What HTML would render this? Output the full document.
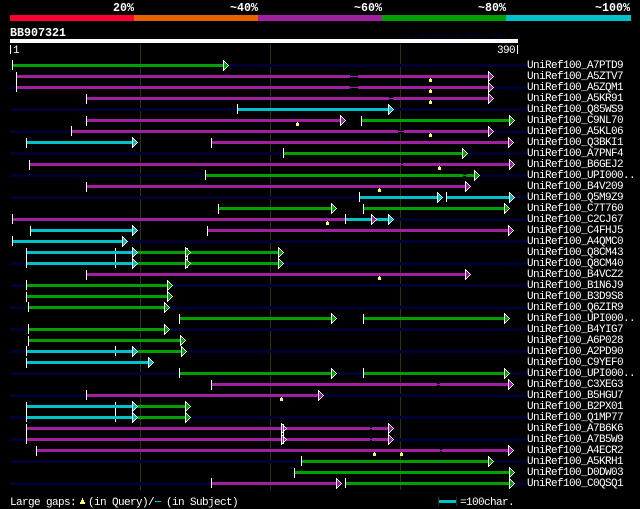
<!DOCTYPE html>
<html><head><meta charset="utf-8"><style>
html,body{margin:0;padding:0;background:#000;width:640px;height:509px;overflow:hidden}
svg{display:block}
rect{shape-rendering:crispEdges}
text{font-family:"Liberation Mono",monospace;font-size:11px;letter-spacing:-.6px;fill:#fff;white-space:pre}
.h{font-weight:bold;font-size:11.67px;letter-spacing:0}
.p{fill:#a020a0}.g{fill:#00a000}.c{fill:#00c0c8}.d{fill:#000033}.y{fill:#ffff66}.l{fill:#333300}.w{fill:#fff}
</style></head><body>
<svg width="640" height="509" viewBox="0 0 640 509" xmlns="http://www.w3.org/2000/svg">
<defs>
<g id="a"><rect class="w" x="0" y="-5" width="1" height="11"/><rect class="w" x="1" y="-4" width="1" height="9"/><rect class="w" x="2" y="-3" width="1" height="7"/><rect class="w" x="3" y="-2" width="1" height="5"/><rect class="w" x="4" y="-1" width="1" height="3"/><rect class="w" x="5" y="0" width="1" height="1"/><rect x="1" y="-3" width="1" height="7"/><rect x="2" y="-2" width="1" height="5"/><rect x="3" y="-1" width="1" height="3"/><rect x="4" y="0" width="1" height="1"/></g>
<rect id="t" class="w" x="0" y="-5" width="1" height="10"/>
<rect id="u" class="w" x="0" y="-4" width="1" height="10"/>
<g id="k"><rect class="y" x="0" y="2" width="1" height="1"/><rect class="y" x="-1" y="3" width="3" height="3"/></g>
</defs>

<text class="h" x="113" y="11">20%</text><text class="h" x="230" y="11">~40%</text><text class="h" x="354" y="11">~60%</text><text class="h" x="478" y="11">~80%</text><text class="h" x="595" y="11">~100%</text>
<rect x="10" y="15" width="124" height="6" fill="#ff0033"/><rect x="134" y="15" width="124" height="6" fill="#e66100"/><rect class="p" x="258" y="15" width="124" height="6"/><rect class="g" x="382" y="15" width="124" height="6"/><rect class="c" x="506" y="15" width="125" height="6"/>
<text class="h" x="10" y="36">BB907321</text>
<text x="402" y="38" style="fill:#000033;font-size:9px;letter-spacing:-.4px">AlignView.pm Beta rel.7</text>
<rect class="w" x="10" y="39" width="508" height="4"/>
<rect class="w" x="10" y="45" width="1" height="9"/><text x="13" y="53">1</text>
<text x="497" y="53">390</text><rect class="w" x="517" y="45" width="1" height="9"/>

<rect class="l" x="140" y="44" width="1" height="446"/><rect class="l" x="270" y="44" width="1" height="446"/><rect class="l" x="400" y="44" width="1" height="446"/>

<rect class="d" x="10" y="64" width="517" height="3"/><rect class="d" x="10" y="86" width="517" height="3"/><rect class="d" x="10" y="108" width="517" height="3"/><rect class="d" x="10" y="130" width="517" height="3"/><rect class="d" x="10" y="152" width="517" height="3"/><rect class="d" x="10" y="174" width="517" height="3"/><rect class="d" x="10" y="196" width="517" height="3"/><rect class="d" x="10" y="218" width="517" height="3"/><rect class="d" x="10" y="240" width="517" height="3"/><rect class="d" x="10" y="262" width="517" height="3"/><rect class="d" x="10" y="284" width="517" height="3"/><rect class="d" x="10" y="306" width="517" height="3"/><rect class="d" x="10" y="328" width="517" height="3"/><rect class="d" x="10" y="350" width="517" height="3"/><rect class="d" x="10" y="372" width="517" height="3"/><rect class="d" x="10" y="394" width="517" height="3"/><rect class="d" x="10" y="416" width="517" height="3"/><rect class="d" x="10" y="438" width="517" height="3"/><rect class="d" x="10" y="460" width="517" height="3"/><rect class="d" x="10" y="482" width="517" height="3"/>

<!-- 0 -->
<rect class="g" x="12" y="64" width="211" height="3"/><use href="#t" x="12" y="65"/><use href="#a" class="g" x="223" y="65"/>
<!-- 1 -->
<rect class="p" x="16" y="75" width="334" height="3"/><rect class="p" x="350" y="76" width="8" height="1"/><rect class="p" x="358" y="75" width="130" height="3"/><use href="#u" x="16" y="76"/><use href="#a" class="p" x="488" y="76"/><use href="#k" x="430" y="76"/>
<!-- 2 -->
<rect class="p" x="16" y="86" width="334" height="3"/><rect x="350" y="86" width="8" height="1" fill="#000"/><rect x="350" y="88" width="8" height="1" fill="#000"/><rect class="p" x="350" y="87" width="8" height="1"/><rect class="p" x="358" y="86" width="130" height="3"/><use href="#t" x="16" y="87"/><use href="#a" class="p" x="488" y="87"/><use href="#k" x="430" y="87"/>
<!-- 3 -->
<rect class="p" x="86" y="97" width="303" height="3"/><rect class="p" x="389" y="98" width="4" height="1"/><rect class="p" x="393" y="97" width="95" height="3"/><use href="#u" x="86" y="98"/><use href="#a" class="p" x="488" y="98"/><use href="#k" x="430" y="98"/>
<!-- 4 -->
<rect class="c" x="237" y="108" width="151" height="3"/><use href="#t" x="237" y="109"/><use href="#a" class="c" x="388" y="109"/>
<!-- 5 -->
<rect class="p" x="86" y="119" width="254" height="3"/><use href="#u" x="86" y="120"/><use href="#a" class="p" x="340" y="120"/><use href="#k" x="297" y="120"/><rect class="g" x="361" y="119" width="148" height="3"/><use href="#u" x="361" y="120"/><use href="#a" class="g" x="509" y="120"/>
<!-- 6 -->
<rect class="p" x="71" y="130" width="327" height="3"/><rect x="398" y="130" width="6" height="3" fill="#000"/><rect class="p" x="398" y="131" width="6" height="1"/><rect class="p" x="404" y="130" width="84" height="3"/><use href="#t" x="71" y="131"/><use href="#a" class="p" x="488" y="131"/><use href="#k" x="430" y="131"/>
<!-- 7 -->
<rect class="c" x="26" y="141" width="106" height="3"/><use href="#u" x="26" y="142"/><use href="#a" class="c" x="132" y="142"/><rect class="p" x="211" y="141" width="297" height="3"/><use href="#u" x="211" y="142"/><use href="#a" class="p" x="508" y="142"/>
<!-- 8 -->
<rect class="g" x="283" y="152" width="179" height="3"/><use href="#t" x="283" y="153"/><use href="#a" class="g" x="462" y="153"/>
<!-- 9 -->
<rect class="p" x="29" y="163" width="372" height="3"/><rect class="p" x="401" y="164" width="2" height="1"/><rect class="p" x="403" y="163" width="106" height="3"/><use href="#u" x="29" y="164"/><use href="#a" class="p" x="509" y="164"/><use href="#k" x="439" y="164"/>
<!-- 10 -->
<rect class="g" x="205" y="174" width="258" height="3"/><rect x="463" y="174" width="3" height="3" fill="#000"/><rect class="g" x="463" y="175" width="3" height="1"/><rect class="g" x="466" y="174" width="8" height="3"/><use href="#t" x="205" y="175"/><use href="#a" class="g" x="474" y="175"/>
<!-- 11 -->
<rect class="p" x="86" y="185" width="379" height="3"/><use href="#u" x="86" y="186"/><use href="#a" class="p" x="465" y="186"/><use href="#k" x="379" y="186"/>
<!-- 12 -->
<rect class="c" x="359" y="196" width="78" height="3"/><use href="#t" x="359" y="197"/><use href="#a" class="c" x="437" y="197"/><rect x="443" y="196" width="3" height="3" fill="#000"/><rect class="c" x="446" y="196" width="63" height="3"/><use href="#t" x="446" y="197"/><use href="#a" class="c" x="509" y="197"/>
<!-- 13 -->
<rect class="g" x="218" y="207" width="113" height="3"/><use href="#u" x="218" y="208"/><use href="#a" class="g" x="331" y="208"/><rect class="g" x="363" y="207" width="141" height="3"/><use href="#u" x="363" y="208"/><use href="#a" class="g" x="504" y="208"/>
<!-- 14 -->
<rect class="p" x="12" y="218" width="333" height="3"/><use href="#t" x="12" y="219"/><use href="#k" x="327" y="219"/><rect class="c" x="345" y="218" width="43" height="3"/><use href="#t" x="345" y="219"/><use href="#a" class="p" x="371" y="219"/><use href="#a" class="c" x="388" y="219"/>
<!-- 15 -->
<rect class="c" x="30" y="229" width="102" height="3"/><use href="#u" x="30" y="230"/><use href="#a" class="c" x="132" y="230"/><rect class="p" x="207" y="229" width="301" height="3"/><use href="#u" x="207" y="230"/><use href="#a" class="p" x="508" y="230"/>
<!-- 16 -->
<rect class="c" x="12" y="240" width="110" height="3"/><use href="#t" x="12" y="241"/><use href="#a" class="c" x="122" y="241"/>
<!-- 17 -->
<use href="#u" x="115" y="252"/><use href="#u" x="187" y="252"/><rect class="c" x="26" y="251" width="106" height="3"/><rect class="g" x="132" y="251" width="146" height="3"/><use href="#u" x="26" y="252"/><use href="#a" class="c" x="132" y="252"/><use href="#a" class="g" x="185" y="252"/><use href="#a" class="g" x="278" y="252"/>
<!-- 18 -->
<use href="#t" x="115" y="263"/><use href="#t" x="187" y="263"/><rect class="c" x="26" y="262" width="106" height="3"/><rect class="g" x="132" y="262" width="146" height="3"/><use href="#t" x="26" y="263"/><use href="#a" class="c" x="132" y="263"/><use href="#a" class="g" x="185" y="263"/><use href="#a" class="g" x="278" y="263"/>
<!-- 19 -->
<rect class="p" x="86" y="273" width="379" height="3"/><use href="#u" x="86" y="274"/><use href="#a" class="p" x="465" y="274"/><use href="#k" x="379" y="274"/>
<!-- 20 -->
<rect class="g" x="26" y="284" width="141" height="3"/><use href="#t" x="26" y="285"/><use href="#a" class="g" x="167" y="285"/>
<!-- 21 -->
<rect class="g" x="26" y="295" width="141" height="3"/><use href="#u" x="26" y="296"/><use href="#a" class="g" x="167" y="296"/>
<!-- 22 -->
<rect class="g" x="28" y="306" width="136" height="3"/><use href="#t" x="28" y="307"/><use href="#a" class="g" x="164" y="307"/>
<!-- 23 -->
<rect class="g" x="179" y="317" width="152" height="3"/><use href="#u" x="179" y="318"/><use href="#a" class="g" x="331" y="318"/><rect class="g" x="363" y="317" width="141" height="3"/><use href="#u" x="363" y="318"/><use href="#a" class="g" x="504" y="318"/>
<!-- 24 -->
<rect class="g" x="28" y="328" width="136" height="3"/><use href="#t" x="28" y="329"/><use href="#a" class="g" x="164" y="329"/>
<!-- 25 -->
<rect class="g" x="28" y="339" width="152" height="3"/><use href="#u" x="28" y="340"/><use href="#a" class="g" x="180" y="340"/>
<!-- 26 -->
<use href="#t" x="115" y="351"/><rect class="c" x="26" y="350" width="106" height="3"/><rect class="g" x="132" y="350" width="49" height="3"/><use href="#t" x="26" y="351"/><use href="#a" class="c" x="132" y="351"/><use href="#a" class="g" x="181" y="351"/>
<!-- 27 -->
<rect class="c" x="26" y="361" width="122" height="3"/><use href="#u" x="26" y="362"/><use href="#a" class="c" x="148" y="362"/>
<!-- 28 -->
<rect class="g" x="179" y="372" width="152" height="3"/><use href="#t" x="179" y="373"/><use href="#a" class="g" x="331" y="373"/><rect class="g" x="363" y="372" width="141" height="3"/><use href="#t" x="363" y="373"/><use href="#a" class="g" x="504" y="373"/>
<!-- 29 -->
<rect class="p" x="211" y="383" width="226" height="3"/><rect class="p" x="437" y="384" width="3" height="1"/><rect class="p" x="440" y="383" width="68" height="3"/><use href="#u" x="211" y="384"/><use href="#a" class="p" x="508" y="384"/>
<!-- 30 -->
<rect class="p" x="86" y="394" width="232" height="3"/><use href="#t" x="86" y="395"/><use href="#a" class="p" x="318" y="395"/><use href="#k" x="281" y="395"/>
<!-- 31 -->
<use href="#u" x="115" y="406"/><rect class="c" x="26" y="405" width="106" height="3"/><rect class="g" x="132" y="405" width="53" height="3"/><use href="#u" x="26" y="406"/><use href="#a" class="c" x="132" y="406"/><use href="#a" class="g" x="185" y="406"/>
<!-- 32 -->
<use href="#t" x="115" y="417"/><rect class="c" x="26" y="416" width="106" height="3"/><rect class="g" x="132" y="416" width="53" height="3"/><use href="#t" x="26" y="417"/><use href="#a" class="c" x="132" y="417"/><use href="#a" class="g" x="185" y="417"/>
<!-- 33 -->
<rect class="p" x="26" y="427" width="344" height="3"/><rect class="p" x="370" y="428" width="2" height="1"/><rect class="p" x="372" y="427" width="16" height="3"/><use href="#u" x="26" y="428"/><use href="#a" class="p" x="281" y="428"/><use href="#u" x="283" y="428"/><use href="#a" class="p" x="388" y="428"/>
<!-- 34 -->
<rect class="p" x="26" y="438" width="344" height="3"/><rect class="p" x="370" y="439" width="2" height="1"/><rect class="p" x="372" y="438" width="16" height="3"/><use href="#t" x="26" y="439"/><use href="#a" class="p" x="281" y="439"/><use href="#t" x="283" y="439"/><use href="#a" class="p" x="388" y="439"/>
<!-- 35 -->
<rect class="p" x="36" y="449" width="404" height="3"/><rect class="p" x="440" y="450" width="2" height="1"/><rect class="p" x="442" y="449" width="66" height="3"/><use href="#u" x="36" y="450"/><use href="#a" class="p" x="508" y="450"/><use href="#k" x="374" y="450"/><use href="#k" x="401" y="450"/>
<!-- 36 -->
<rect class="g" x="301" y="460" width="187" height="3"/><use href="#t" x="301" y="461"/><use href="#a" class="g" x="488" y="461"/>
<!-- 37 -->
<rect class="g" x="294" y="471" width="215" height="3"/><use href="#u" x="294" y="472"/><use href="#a" class="g" x="509" y="472"/>
<!-- 38 -->
<rect class="p" x="211" y="482" width="125" height="3"/><use href="#t" x="211" y="483"/><use href="#a" class="p" x="336" y="483"/><rect x="342" y="482" width="3" height="3" fill="#000"/><rect class="g" x="345" y="482" width="164" height="3"/><use href="#t" x="345" y="483"/><use href="#a" class="g" x="509" y="483"/>

<text x="527" y="68">UniRef100_A7PTD9</text>
<text x="527" y="79">UniRef100_A5ZTV7</text>
<text x="527" y="90">UniRef100_A5ZQM1</text>
<text x="527" y="101">UniRef100_A5KR91</text>
<text x="527" y="112">UniRef100_Q85WS9</text>
<text x="527" y="123">UniRef100_C9NL70</text>
<text x="527" y="134">UniRef100_A5KL06</text>
<text x="527" y="145">UniRef100_Q3BKI1</text>
<text x="527" y="156">UniRef100_A7PNF4</text>
<text x="527" y="167">UniRef100_B6GEJ2</text>
<text x="527" y="178">UniRef100_UPI000..</text>
<text x="527" y="189">UniRef100_B4V209</text>
<text x="527" y="200">UniRef100_Q5M9Z9</text>
<text x="527" y="211">UniRef100_C7T760</text>
<text x="527" y="222">UniRef100_C2CJ67</text>
<text x="527" y="233">UniRef100_C4FHJ5</text>
<text x="527" y="244">UniRef100_A4QMC0</text>
<text x="527" y="255">UniRef100_Q8CM43</text>
<text x="527" y="266">UniRef100_Q8CM40</text>
<text x="527" y="277">UniRef100_B4VCZ2</text>
<text x="527" y="288">UniRef100_B1N6J9</text>
<text x="527" y="299">UniRef100_B3D9S8</text>
<text x="527" y="310">UniRef100_Q6ZIR9</text>
<text x="527" y="321">UniRef100_UPI000..</text>
<text x="527" y="332">UniRef100_B4YIG7</text>
<text x="527" y="343">UniRef100_A6P028</text>
<text x="527" y="354">UniRef100_A2PD90</text>
<text x="527" y="365">UniRef100_C9YEF0</text>
<text x="527" y="376">UniRef100_UPI000..</text>
<text x="527" y="387">UniRef100_C3XEG3</text>
<text x="527" y="398">UniRef100_B5HGU7</text>
<text x="527" y="409">UniRef100_B2PX01</text>
<text x="527" y="420">UniRef100_Q1MP77</text>
<text x="527" y="431">UniRef100_A7B6K6</text>
<text x="527" y="442">UniRef100_A7B5W9</text>
<text x="527" y="453">UniRef100_A4ECR2</text>
<text x="527" y="464">UniRef100_A5KRH1</text>
<text x="527" y="475">UniRef100_D0DW03</text>
<text x="527" y="486">UniRef100_C0QSQ1</text>

<text x="10" y="505">Large gaps:</text>
<rect class="y" x="82" y="498" width="1" height="2"/><rect class="y" x="81" y="500" width="3" height="2"/><rect class="y" x="80" y="502" width="5" height="2"/>
<text x="88" y="505">(in Query)/</text>
<rect class="c" x="155" y="501" width="6" height="1"/>
<text x="166" y="505">(in Subject)</text>
<rect class="l" x="438" y="497" width="1" height="9"/><rect class="l" x="456" y="497" width="1" height="9"/><rect class="c" x="439" y="500" width="17" height="3"/>
<text x="460" y="505">=100char.</text>
</svg>
</body></html>
